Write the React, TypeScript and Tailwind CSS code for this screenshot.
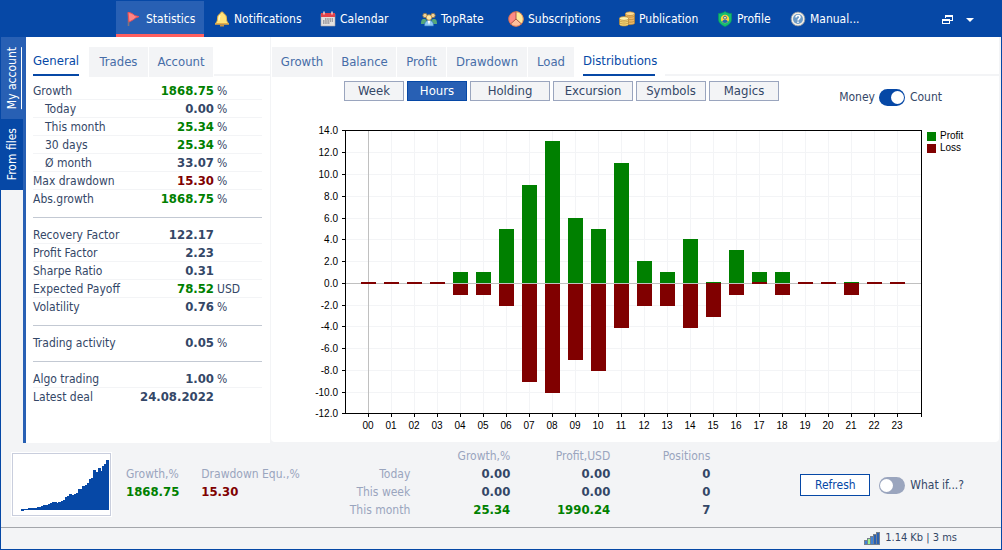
import React, { useState } from 'react';

type Tone = 'plain' | 'good' | 'bad';

interface Stat {
  label: string;
  value: string;
  unit?: string;
  tone?: Tone;
  indent?: boolean;
}

const toneClass: Record<Tone, string> = {
  plain: 'text-[#344767]',
  good: 'text-[#008000]',
  bad: 'text-[#800000]',
};

const statGroups: Stat[][] = [
  [
    { label: 'Growth', value: '1868.75', unit: '%', tone: 'good' },
    { label: 'Today', value: '0.00', unit: '%', indent: true },
    { label: 'This month', value: '25.34', unit: '%', tone: 'good', indent: true },
    { label: '30 days', value: '25.34', unit: '%', tone: 'good', indent: true },
    { label: 'Ø month', value: '33.07', unit: '%', indent: true },
    { label: 'Max drawdown', value: '15.30', unit: '%', tone: 'bad' },
    { label: 'Abs.growth', value: '1868.75', unit: '%', tone: 'good' },
  ],
  [
    { label: 'Recovery Factor', value: '122.17' },
    { label: 'Profit Factor', value: '2.23' },
    { label: 'Sharpe Ratio', value: '0.31' },
    { label: 'Expected Payoff', value: '78.52', unit: 'USD', tone: 'good' },
    { label: 'Volatility', value: '0.76', unit: '%' },
  ],
  [{ label: 'Trading activity', value: '0.05', unit: '%' }],
  [
    { label: 'Algo trading', value: '1.00', unit: '%' },
    { label: 'Latest deal', value: '24.08.2022' },
  ],
];

const summaryRows: { label: string; cells: string[]; good?: boolean }[] = [
  { label: 'Today', cells: ['0.00', '0.00', '0'] },
  { label: 'This week', cells: ['0.00', '0.00', '0'] },
  { label: 'This month', cells: ['25.34', '1990.24', '7'], good: true },
];

const profit = [0, 0, 0, 0, 1, 1, 5, 9, 13, 6, 5, 11, 2, 1, 4, 0, 3, 1, 1, 0, 0, 0, 0, 0];
const loss = [0, 0, 0, 0, 1, 1, 2, 9, 10, 7, 8, 4, 2, 2, 4, 3, 1, 0, 1, 0, 0, 1, 0, 0];

// [x, height] of each step of the equity curve
const equity = [
  [9, 1], [16, 2], [25, 3], [29, 4], [31, 5], [36, 6], [38, 7], [40, 8], [45, 7], [46, 8], [49, 9],
  [51, 10], [53, 13], [55, 14], [57, 16], [60, 15], [62, 16], [64, 17], [66, 21], [70, 24], [73, 25],
  [75, 27], [77, 31], [79, 32], [81, 40], [84, 38], [86, 42], [89, 39], [90, 44], [92, 46], [94, 50],
];

/* Icons */
const FlagIcon = () => (
  <svg width="16" height="16" viewBox="0 0 16 16">
    <path d="M2.5 1v14" stroke="#7d7480" strokeWidth="1.6" />
    <path d="M2 1.5c3 0 5 1.5 7 3.2l4 .9-3.6 1.5C7.5 9 5 10 3 11z" fill="#ff8585" stroke="#e94f56" strokeWidth="1" />
  </svg>
);

const BellIcon = () => (
  <svg width="16" height="16" viewBox="0 0 16 16">
    <path d="M6.5 2.5a1.5 1.5 0 0 1 3 0C12 3.5 12.5 5.5 12.5 8c0 2 .8 3 2 4.5h-13C2.700 11 3.500 10 3.500 8c0-2.500.5-4.500 3-5.500z" fill="#ffe278" stroke="#e8b647" />
    <path d="M6 4.500c-.9 1.200-1 2.500-1 5" stroke="#fff8d0" strokeWidth="1.500" fill="none" />
    <path d="M1 13h14" stroke="#e0a948" strokeWidth="1.500" />
    <path d="M6 14h4v1.500H6z" fill="#c98f3a" />
  </svg>
);

const CalendarIcon = () => (
  <svg width="16" height="16" viewBox="0 0 16 16">
    <path d="M1 3h14v12H1z" fill="#e4e2e0" stroke="#a9a9ad" strokeWidth=".6" />
    <path d="M1 2h14v4H1z" fill="#e2434b" />
    <path d="M4 .5v3M12 .5v3" stroke="#f1d2d2" strokeWidth="1.5" />
    <path d="M5 8h8M3 10h10M3 12h7" stroke="#8b8b90" strokeWidth="1.3" strokeDasharray="1.5 .7" />
  </svg>
);

const PeopleIcon = () => (
  <svg width="16" height="16" viewBox="0 0 16 16">
    <path d="M0 13c0-4 1-5 3-5s3 1 3 5zM10 13c0-4 1-5 3-5s3 1 3 5z" fill="#56a878" />
    <circle cx="4" cy="4.500" r="2.200" fill="#f0d09a" stroke="#8a7444" strokeWidth=".8" />
    <circle cx="12" cy="4.500" r="2.200" fill="#f0d09a" stroke="#8a7444" strokeWidth=".8" />
    <path d="M3.500 15c0-4 1.500-5.500 4.500-5.500s4.500 1.500 4.500 5.500z" fill="#8cc8f4" stroke="#2f73bb" strokeWidth=".7" />
    <path d="M6.500 9.500h3L8 14z" fill="#fff" />
    <circle cx="8" cy="6.500" r="2.700" fill="#ffe9a8" stroke="#b98b3a" strokeWidth=".8" />
  </svg>
);

const PieIcon = () => (
  <svg width="16" height="16" viewBox="0 0 16 16">
    <circle cx="8" cy="8" r="7.500" fill="#ff8a85" />
    <path d="M8 8V.5A7.500 7.500 0 0 1 13.500 13z" fill="#ffeb9b" />
    <path d="M8 8l5.500 5A7.500 7.500 0 0 1 2.500 13z" fill="#ffc09c" />
    <path d="M8 .5V8l5.500 5M8 8l-5.500 5" stroke="#a34d3d" strokeWidth=".9" fill="none" />
    <circle cx="8" cy="8" r="7.300" fill="none" stroke="#c9663f" strokeWidth=".8" />
  </svg>
);

const CoinsIcon = () => (
  <svg width="16" height="16" viewBox="0 0 16 16" stroke="#b58432" strokeWidth=".7">
    <path d="M6.500 2.500v10c1 1.500 8 1.500 9 0v-10z" fill="#eeb765" />
    <ellipse cx="11" cy="2.700" rx="4.500" ry="1.900" fill="#ffdc93" />
    <path d="M6.500 5c1 1.500 8 1.500 9 0M6.500 7.500c1 1.500 8 1.500 9 0M6.500 10c1 1.500 8 1.500 9 0" fill="none" />
    <path d="M.5 7.500v6c1 2 8 2 9 0v-6z" fill="#f8dd7c" />
    <ellipse cx="5" cy="7.500" rx="4.500" ry="1.900" fill="#fff2ac" />
    <path d="M.5 9.500c1 2 8 2 9 0M.5 11.500c1 2 8 2 9 0" fill="none" />
  </svg>
);

const ShieldIcon = () => (
  <svg width="16" height="16" viewBox="0 0 16 16">
    <path d="M8 .5c2 1.500 4 2 6.500 2V8c0 4-3 6-6.500 7.500C4.500 14 1.500 12 1.500 8V2.500C4 2.500 6 2 8 .5z" fill="#14bd72" stroke="#099b5b" strokeWidth=".7" />
    <circle cx="8" cy="8" r="4.200" fill="#ffd33e" />
    <circle cx="8" cy="6.700" r="1.500" fill="#ffe9a0" stroke="#1d5fa8" strokeWidth=".9" />
    <path d="M5.200 11c0-3 5.600-3 5.600 0-1.500 1.400-4.100 1.400-5.600 0z" fill="#1d67b5" />
  </svg>
);

const HelpIcon = () => (
  <svg width="16" height="16" viewBox="0 0 16 16">
    <circle cx="8" cy="8" r="6.900" fill="#f3efe6" stroke="#8d949c" strokeWidth=".8" />
    <circle cx="8" cy="8" r="5" fill="#6c9bc8" />
    <path d="M6 6.500c0-2.600 4-2.400 4-.2C10 7.700 8 7.700 8 9.500" fill="none" stroke="#fff" strokeWidth="1.500" />
    <path d="M8 10.500v1.500" stroke="#fff" strokeWidth="1.500" />
  </svg>
);

const SignalIcon = () => (
  <svg width="16" height="13" viewBox="0 0 16 13" shapeRendering="crispEdges" stroke="#77808c">
    <path d="M.5 8.500h3v4h-3z" fill="#3f83d8" />
    <path d="M3.500 6.500h3v6h-3z" fill="#9cf08d" />
    <path d="M6.500 4.500h3v8h-3z" fill="#3f83d8" />
    <path d="M9.500 2.500h3v10h-3z" fill="#2860b4" />
    <path d="M12.500.5h3v12h-3z" fill="#2860b4" />
  </svg>
);

const navItems = [
  { label: 'Statistics', icon: FlagIcon, width: 'w-[88px]' },
  { label: 'Notifications', icon: BellIcon, width: 'w-[106px]' },
  { label: 'Calendar', icon: CalendarIcon, width: 'w-[101px]' },
  { label: 'TopRate', icon: PeopleIcon, width: 'w-[87px]' },
  { label: 'Subscriptions', icon: PieIcon, width: 'w-[111px]' },
  { label: 'Publication', icon: CoinsIcon, width: 'w-[98px]' },
  { label: 'Profile', icon: ShieldIcon, width: 'w-[73px]' },
  { label: 'Manual...', icon: HelpIcon, width: 'w-[80px]' },
];

const chartTabs = [
  { label: 'Growth', width: 'w-[60px]' },
  { label: 'Balance', width: 'w-[63px]' },
  { label: 'Profit', width: 'w-[49px]' },
  { label: 'Drawdown', width: 'w-[80px]' },
  { label: 'Load', width: 'w-[46px]' },
];

const modes = [
  { label: 'Week', width: 'w-[60px]' },
  { label: 'Hours', width: 'w-[60px]' },
  { label: 'Holding', width: 'w-20' },
  { label: 'Excursion', width: 'w-20' },
  { label: 'Symbols', width: 'w-[70px]' },
  { label: 'Magics', width: 'w-[70px]' },
];

const Header = () => (
  <header className="flex h-[37px] items-stretch bg-[#0648a6] pt-px text-white">
    <nav className="ml-[115px] flex">
      {navItems.map(({ label, icon: Icon, width }, i) => (
        <button
          key={label}
          className={`flex items-center gap-1 whitespace-nowrap border-b-[3px] pl-[10px] pt-[2px] ${width} ${i === 0 ? 'border-[#ff5f5f] bg-[#2860b4]' : 'border-transparent'}`}
        >
          <Icon />
          {label}
        </button>
      ))}
    </nav>
    <div className="ml-auto mr-[27px] flex items-center gap-3 pt-[2px]">
      <button aria-label="Restore window">
        <svg width="12" height="10" viewBox="0 0 12 10" fill="none" stroke="#fff" shapeRendering="crispEdges">
          <path d="M3.500 3V.5h7v5H8M3 1.500h8M.5 4.500h7v4h-7zM0 5.500h8" />
        </svg>
      </button>
      <button aria-label="Window menu">
        <svg width="8" height="4" viewBox="0 0 8 4">
          <path d="M0 0h8L4 4z" fill="#fff" />
        </svg>
      </button>
    </div>
  </header>
);

const StatsPanel = () => (
  <section className="w-[245px] shrink-0 border-r border-[#f3f4f6] bg-white pt-[10px]">
    <div className="flex h-[30px] pl-[7px] text-[13px]">
      <button className="mb-px w-[46px] border-b-2 border-[#0648a6] text-[#0648a6]">General</button>
      <button className="ml-[10px] w-[59px] bg-[#f3f4f6] text-[#476da8]">Trades</button>
      <button className="ml-px w-16 bg-[#f3f4f6] text-[#476da8]">Account</button>
      <span className="mb-px ml-px flex-1 border-b-2 border-[#f3f4f6]" />
    </div>
    <div className="pl-[7px] pr-2 pt-[5px]">
      <table className="w-full border-separate border-spacing-0">
        {statGroups.map((group, g) => (
          <tbody key={g}>
            {g > 0 && (
              <tr className="h-[18px]">
                <td colSpan={3} className="p-0">
                  <hr className="border-[#c3c9d3]" />
                </td>
              </tr>
            )}
            {group.map((s, i) => (
              <tr
                key={s.label}
                className={`h-[18px] leading-4 [&>*]:border-b [&>*]:pt-px ${i < group.length - 1 ? '[&>*]:border-[#f3f4f6]' : '[&>*]:border-transparent'}`}
              >
                <th scope="row" className={`text-left font-normal ${s.indent ? 'pl-3' : ''}`}>{s.label}</th>
                <td className={`text-right text-[13px] font-bold ${toneClass[s.tone ?? 'plain']}`}>{s.value}</td>
                <td className="w-12 pl-[3px]">{s.unit}</td>
              </tr>
            ))}
          </tbody>
        ))}
      </table>
    </div>
  </section>
);

const PLOT_TOP = 26;
const PLOT_LEFT = 74;
const PLOT_HEIGHT = 283;
const ZERO = 179;
const UNIT = PLOT_HEIGHT / 26;
const STEP = 23;

const ticks = Array.from({ length: 14 }, (_, i) => ({
  value: 14 - i * 2,
  y: PLOT_TOP + Math.ceil((i * PLOT_HEIGHT) / 13),
}));

const HoursChart = () => (
  <svg viewBox="0 0 728 338" className="block w-full" role="img" aria-label="Profit and loss by hour">
    <g shapeRendering="crispEdges">
      {ticks.map(({ value, y }) => (
        <path key={value} d={`M${PLOT_LEFT} ${y + 0.5}h576`} stroke={value === 0 ? '#c0c0c0' : '#f3f4f6'} />
      ))}
      {profit.map((_, i) => (
        <path key={i} d={`M${97.5 + i * STEP} ${PLOT_TOP}v283`} stroke={i === 0 ? '#c0c0c0' : '#f3f4f6'} />
      ))}
      {profit.map((p, i) => {
        const l = loss[i];
        const x = 90 + i * STEP;
        const top = p ? Math.round(p * UNIT) : 1;
        const drop = Math.round(l * UNIT);
        return (
          <g key={i}>
            <rect x={x} y={ZERO - top} width="15" height={top + 1} fill="#008000" />
            <rect x={x} y={l ? ZERO : ZERO - 1} width="15" height={l ? drop + 1 : 2} fill="#800000" />
            {p > 0 && l > 0 && <path d={`M${x} ${ZERO + 0.5}h15`} stroke="#c0c0c0" />}
          </g>
        );
      })}
      <path d="M74.500 26.500h576v283h-576z" fill="none" stroke="#000" />
      {ticks.map(({ value, y }) => (
        <path key={value} d={`M71 ${y + 0.5}h3`} stroke="#000" />
      ))}
      {profit.map((_, i) => (
        <path key={i} d={`M${97.5 + i * STEP} 310v3`} stroke="#000" />
      ))}
      <path d="M650.500 310v3" stroke="#000" />
      <rect x="656" y="28" width="9" height="9" fill="#008000" />
      <rect x="656" y="40" width="9" height="9" fill="#800000" />
    </g>
    <g fontFamily="Liberation Sans, Arial, sans-serif" fontSize="10" fill="#000">
      {ticks.map(({ value, y }) => (
        <text key={value} x="67" y={y + 4} textAnchor="end">{value.toFixed(1)}</text>
      ))}
      {profit.map((_, i) => (
        <text key={i} x={97 + i * STEP} y="325" textAnchor="middle">{String(i).padStart(2, '0')}</text>
      ))}
      <text x="669" y="35">Profit</text>
      <text x="669" y="47">Loss</text>
    </g>
  </svg>
);

interface ToggleProps {
  label: string;
  before?: string;
  checked: boolean;
  onChange: (checked: boolean) => void;
}

const Toggle: React.FC<ToggleProps> = ({ label, before, checked, onChange }) => (
  <label className="flex items-center whitespace-nowrap">
    {before && <span className="mr-1">{before}</span>}
    <input
      type="checkbox"
      checked={checked}
      onChange={(e) => onChange(e.target.checked)}
      className="flex h-[17px] w-[26px] appearance-none items-center rounded-full bg-[#9aa5be] p-px before:block before:size-[13px] before:rounded-full before:bg-white checked:bg-[#0648a6] checked:before:ml-[11px]"
    />
    <span className="ml-[5px]">{label}</span>
  </label>
);

const ChartPanel = () => {
  const [mode, setMode] = useState('Hours');
  const [count, setCount] = useState(true);
  return (
    <section className="mb-px mr-[2px] min-w-0 flex-1 rounded-b-sm bg-white pt-[10px]">
      <div className="flex h-[30px] gap-px pl-px text-[13px] text-[#476da8]">
        {chartTabs.map((tab) => (
          <button key={tab.label} className={`bg-[#f3f4f6] ${tab.width}`}>{tab.label}</button>
        ))}
        <button className="mb-px ml-2 mr-[9px] w-[72px] border-b-2 border-[#0648a6] text-[#0648a6]">Distributions</button>
        <span className="mb-px flex-1 border-b-2 border-[#f3f4f6]" />
      </div>
      <div className="flex h-[27px] items-start pl-[73px] pr-[57px] pt-1">
        <div className="flex gap-[3px]">
          {modes.map((m) => (
            <button
              key={m.label}
              onClick={() => setMode(m.label)}
              className={`h-5 border text-[13px] leading-[18px] ${m.width} ${mode === m.label ? 'border-[#0648a6] bg-[#2860b4] text-white' : 'border-[#9aa5be] bg-[#f3f4f6] text-[#344767]'}`}
            >
              {m.label}
            </button>
          ))}
        </div>
        <div className="ml-auto pt-[7px]">
          <Toggle before="Money" label="Count" checked={count} onChange={setCount} />
        </div>
      </div>
      <HoursChart />
    </section>
  );
};

const Summary = () => {
  const [whatIf, setWhatIf] = useState(false);
  return (
    <section className="flex h-[84px] items-start">
      <div className="ml-[10px] mt-[9px] border border-white">
        <svg width="99" height="63" viewBox="0 0 99 63" shapeRendering="crispEdges" className="block">
          <rect x=".5" y=".5" width="98" height="62" fill="#fff" stroke="#c9cedd" />
          {equity.map(([x, h], i) => (
            <rect key={x} x={x} y={57 - h} width={(equity[i + 1]?.[0] ?? 97) - x} height={h} fill="#0648a6" />
          ))}
          <path d="M9 57.500h3" stroke="#0648a6" />
        </svg>
      </div>
      <dl className="ml-[14px] flex gap-[22px] pt-[22px] leading-[18px]">
        <div>
          <dt className="text-[#9aa5be]">Growth,%</dt>
          <dd className="text-[13px] font-bold text-[#008000]">1868.75</dd>
        </div>
        <div>
          <dt className="text-[#9aa5be]">Drawdown Equ.,%</dt>
          <dd className="text-[13px] font-bold text-[#800000]">15.30</dd>
        </div>
      </dl>
      <table className="ml-auto mt-1 leading-[18px]">
        <thead className="text-[#9aa5be]">
          <tr>
            <td className="w-[100px] p-0" />
            <th className="w-[100px] p-0 text-right font-normal">Growth,%</th>
            <th className="w-[100px] p-0 text-right font-normal">Profit,USD</th>
            <th className="w-[100px] p-0 text-right font-normal">Positions</th>
          </tr>
        </thead>
        <tbody>
          {summaryRows.map((row) => (
            <tr key={row.label}>
              <th scope="row" className="p-0 text-right font-normal text-[#9aa5be]">{row.label}</th>
              {row.cells.map((cell, i) => (
                <td key={i} className={`p-0 text-right text-[13px] font-bold ${row.good && i < 2 ? 'text-[#008000]' : 'text-[#344767]'}`}>{cell}</td>
              ))}
            </tr>
          ))}
        </tbody>
      </table>
      <div className="ml-[90px] mr-[37px] mt-[31px] flex items-center gap-[9px]">
        <button className="h-[22px] w-[70px] border border-[#0648a6] bg-white text-[#0648a6]">Refresh</button>
        <Toggle label="What if...?" checked={whatIf} onChange={setWhatIf} />
      </div>
    </section>
  );
};

export default function App() {
  return (
    <div className="flex min-h-screen flex-col border-x border-b border-[#0648a6] bg-[#f3f4f6] font-['DejaVu_Sans_Condensed','DejaVu_Sans',sans-serif] text-[12px] text-[#344767]">
      <Header />
      <main className="flex flex-1">
        <aside className="flex w-[25px] shrink-0 flex-col border-r-[3px] border-[#2860b4]">
          <button className="flex h-[82px] items-center justify-center bg-[#2860b4] text-white [writing-mode:vertical-rl]">
            <span className="rotate-180 border-l border-white">My account</span>
          </button>
          <button className="flex h-[71px] items-center justify-center bg-[#0648a6] text-white [writing-mode:vertical-rl]">
            <span className="rotate-180">From files</span>
          </button>
        </aside>
        <StatsPanel />
        <ChartPanel />
      </main>
      <Summary />
      <footer className="flex h-[22px] items-center justify-end gap-[5px] border-t border-[#a3a6ab] pr-11 text-[11px]">
        <SignalIcon />
        1.14 Kb | 3 ms
      </footer>
    </div>
  );
}
